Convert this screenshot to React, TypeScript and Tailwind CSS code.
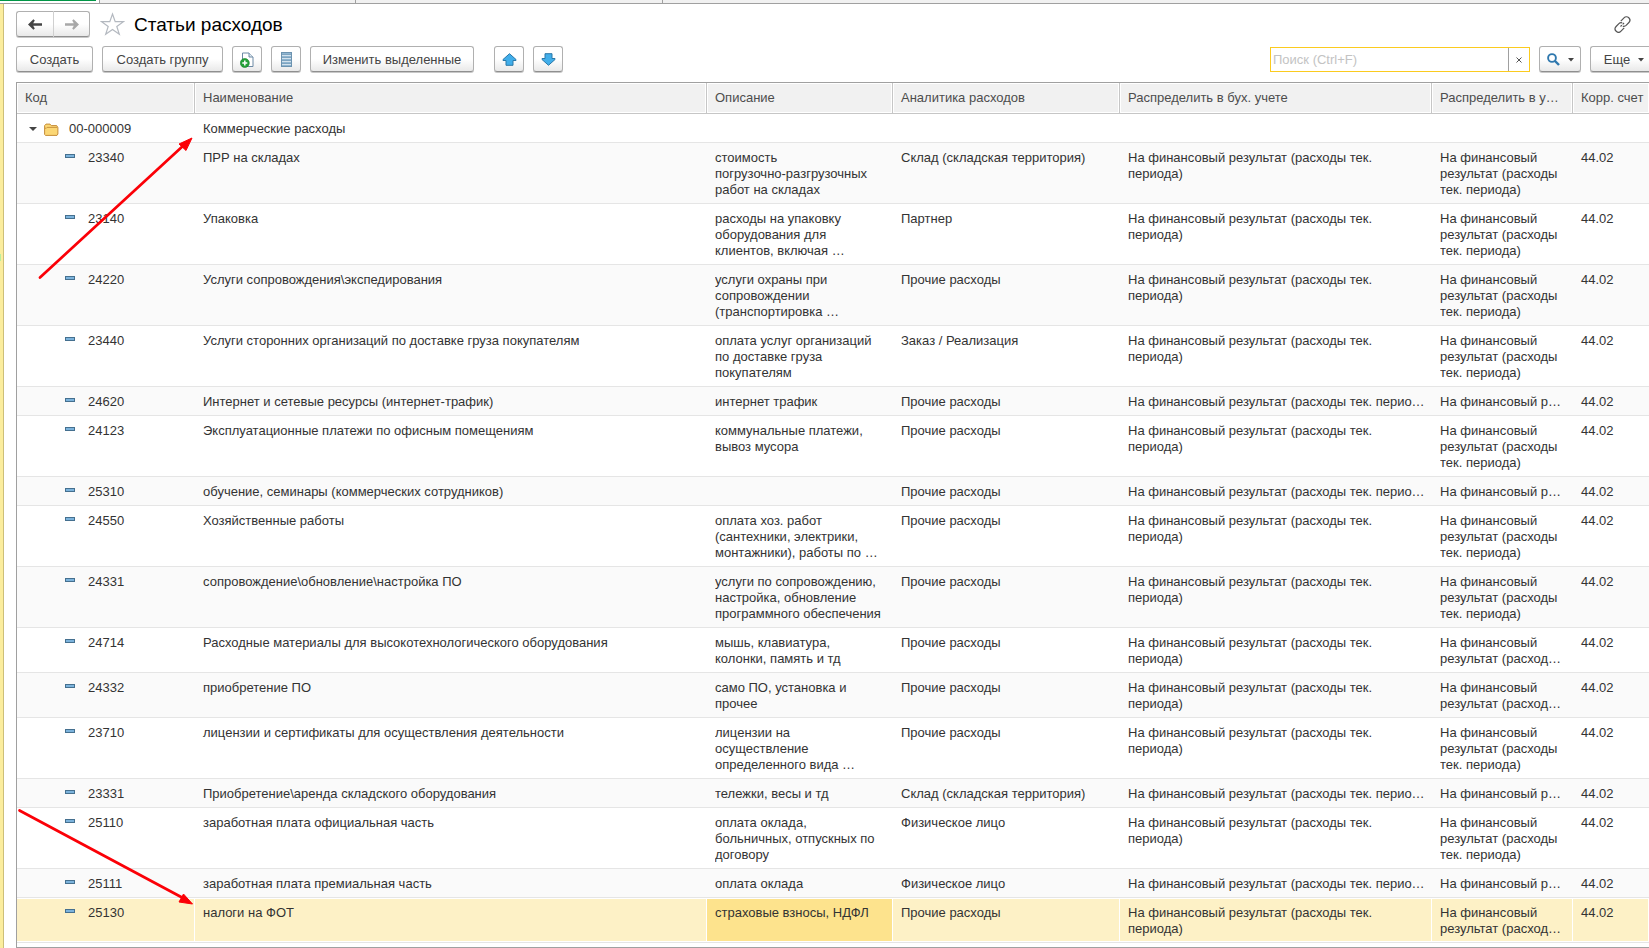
import React, { useState } from 'react';

interface ExpenseItem {
  code: string;
  name: string;
  description: string;
  analytics: string;
  lines: 1 | 2 | 3;
}

const DISTRIBUTION = 'На финансовый результат (расходы тек. периода)';
const ACCOUNT = '44.02';

const ITEMS: ExpenseItem[] = [
  { code: '23340', name: 'ПРР на складах', description: 'стоимость\nпогрузочно-разгрузочных\nработ на складах', analytics: 'Склад (складская территория)', lines: 3 },
  { code: '23140', name: 'Упаковка', description: 'расходы на упаковку оборудования для клиентов, включая …', analytics: 'Партнер', lines: 3 },
  { code: '24220', name: 'Услуги сопровождения\\экспедирования', description: 'услуги охраны при сопровождении (транспортировка …', analytics: 'Прочие расходы', lines: 3 },
  { code: '23440', name: 'Услуги сторонних организаций по доставке груза покупателям', description: 'оплата услуг организаций по доставке груза покупателям', analytics: 'Заказ / Реализация', lines: 3 },
  { code: '24620', name: 'Интернет и сетевые ресурсы (интернет-трафик)', description: 'интернет трафик', analytics: 'Прочие расходы', lines: 1 },
  { code: '24123', name: 'Эксплуатационные платежи по офисным помещениям', description: 'коммунальные платежи, вывоз мусора', analytics: 'Прочие расходы', lines: 3 },
  { code: '25310', name: 'обучение, семинары (коммерческих сотрудников)', description: '', analytics: 'Прочие расходы', lines: 1 },
  { code: '24550', name: 'Хозяйственные работы', description: 'оплата хоз. работ (сантехники, электрики, монтажники), работы по …', analytics: 'Прочие расходы', lines: 3 },
  { code: '24331', name: 'сопровождение\\обновление\\настройка ПО', description: 'услуги по сопровождению, настройка, обновление программного обеспечения', analytics: 'Прочие расходы', lines: 3 },
  { code: '24714', name: 'Расходные материалы для высокотехнологического оборудования', description: 'мышь, клавиатура, колонки, память и тд', analytics: 'Прочие расходы', lines: 2 },
  { code: '24332', name: 'приобретение ПО', description: 'само ПО, установка и прочее', analytics: 'Прочие расходы', lines: 2 },
  { code: '23710', name: 'лицензии и сертификаты для осуществления деятельности', description: 'лицензии на осуществление определенного вида …', analytics: 'Прочие расходы', lines: 3 },
  { code: '23331', name: 'Приобретение\\аренда складского оборудования', description: 'тележки, весы и тд', analytics: 'Склад (складская территория)', lines: 1 },
  { code: '25110', name: 'заработная плата официальная часть', description: 'оплата оклада, больничных, отпускных по договору', analytics: 'Физическое лицо', lines: 3 },
  { code: '25111', name: 'заработная плата премиальная часть', description: 'оплата оклада', analytics: 'Физическое лицо', lines: 1 },
  { code: '25130', name: 'налоги на ФОТ', description: 'страховые взносы, НДФЛ', analytics: 'Прочие расходы', lines: 2 },
];

const COLUMNS = [
  { title: 'Код', width: 'w-[178px]' },
  { title: 'Наименование', width: '' },
  { title: 'Описание', width: 'w-[186px]' },
  { title: 'Аналитика расходов', width: 'w-[227px]' },
  { title: 'Распределить в бух. учете', width: 'w-[312px]' },
  { title: 'Распределить в упр. учете', width: 'w-[141px]' },
  { title: 'Корр. счет', width: 'w-[76px]' },
];

const CLAMP = {
  1: 'truncate',
  2: 'line-clamp-2',
  3: 'line-clamp-3',
};

const buttonBase =
  'flex h-[26px] shrink-0 items-center justify-center rounded-[3px] border border-[#b0b0b0] border-b-[#8f8f8f] bg-linear-to-b from-white from-50% to-[#e9e9e9] pt-px text-[13px] text-[#444444] shadow-[0_1px_0_#c8c8c8]';

const Caret = () => (
  <svg width="6" height="4" viewBox="0 0 6 4" fill="#444444">
    <path d="M0 0h6L3 3.5z" />
  </svg>
);

const LongArrow: React.FC<{ color: string; flip?: boolean }> = ({ color, flip }) => (
  <svg width="14" height="11" viewBox="0 0 14 11" className={flip ? 'rotate-180' : ''}>
    <path d="M0 4.200h8.800L7.200 1.600 8.600.3 14 5.500 8.600 10.700 7.200 9.400 8.800 6.800H0z" fill={color} />
  </svg>
);

const BlueArrow: React.FC<{ down?: boolean }> = ({ down }) => (
  <svg width="15" height="13" viewBox="0 0 15 13" className={down ? 'rotate-180' : ''}>
    <path d="M7.500.7L14 6.500V7.500h-3v4.800H4V7.500H1V6.500z" fill="#41aeea" stroke="#2a78a8" strokeLinejoin="round" />
  </svg>
);

const CopyIcon = () => (
  <svg width="14" height="16" viewBox="0 0 14 16">
    <path d="M2.500 1h6.500l4 4v9.500H2.500z" fill="#fff" stroke="#6d8aa5" />
    <path d="M9 1v4h4" fill="#dfe8f0" stroke="#6d8aa5" />
    <circle cx="4.800" cy="11" r="4.500" fill="#23a038" stroke="#168428" strokeWidth=".6" />
    <path d="M4.800 8.500v5M2.300 11h5" stroke="#fff" strokeWidth="1.500" />
  </svg>
);

const ListIcon = () => (
  <svg width="11" height="15" viewBox="0 0 11 15">
    <rect x=".5" y=".5" width="10" height="14" fill="#8fb5d0" stroke="#6c93b0" />
    <path d="M1 3.500h9M1 6.500h9M1 9.500h9M1 12.500h9" stroke="#d3e2ed" />
    <path d="M1 2.500h9M1 5.500h9M1 8.500h9M1 11.500h9" stroke="#7299b5" strokeWidth=".6" />
  </svg>
);

const FolderIcon = () => (
  <svg width="15" height="13" viewBox="0 0 15 13">
    <path d="M.6 11.500V2.600L2 1.100h4l1.300 1.500h5.400l1.200 2v6.400l-.9 1.400H1.500z" fill="#fbd775" stroke="#c58d3a" />
    <path d="M1 5.200h1.300l.8-.8h10.200" fill="none" stroke="#c58d3a" strokeWidth=".9" />
  </svg>
);

const App = () => {
  const [query, setQuery] = useState('');
  const [expanded, setExpanded] = useState(true);
  const [selected, setSelected] = useState('25130');

  return (
    <div className="relative min-h-screen overflow-hidden bg-white font-['Liberation_Sans',Arial,sans-serif] text-[13px] leading-4 text-[#333333]">
      {/* Window tabs strip */}
      <div className="flex h-1 border-b border-[#a0a0a0] bg-[#f1f1f1]">
        <div className="w-24 border-t border-[#009646] bg-white" />
        <div className="w-1 border-r border-[#a0a0a0] bg-white" />
        <div className="w-64 border-r border-[#a0a0a0]" />
        <div className="w-[307px] border-r border-[#a0a0a0]" />
      </div>

      <div className="flex">
        <div className="w-1 shrink-0 border-r border-[#cdbf78] bg-[#fbed9e] pt-[250px]">
          <div className="h-[7px] w-px bg-[#b9ef9e]" />
        </div>

        <main className="min-w-0 flex-1 pl-3">
          <header className="flex h-10 items-center">
            <div className="flex rounded-[3px]">
              <button aria-label="Назад" className={`${buttonBase} w-[38px] rounded-r-none border-r-[#d0d0d0]`}>
                <LongArrow color="#444444" flip />
              </button>
              <button aria-label="Вперед" className={`${buttonBase} w-9 rounded-l-none border-l-0`}>
                <LongArrow color="#a8a8a8" />
              </button>
            </div>
            <button aria-label="Добавить в избранное" className="ml-2.5">
              <svg width="25" height="24" viewBox="0 0 25 24">
                <path
                  d="M12.500 2l2.700 7.700h8.200l-6.600 4.800 2.500 7.800-6.800-4.800-6.800 4.800 2.500-7.800L1.600 9.700h8.200z"
                  fill="#fff"
                  stroke="#b4b9c0"
                  strokeWidth="1.200"
                />
              </svg>
            </button>
            <h1 className="ml-[9px] pt-px text-[19px] leading-6 text-black">Статьи расходов</h1>
            <button aria-label="Получить ссылку" className="mr-[18px] ml-auto">
              <svg width="17" height="17" viewBox="0 0 17 17" fill="none" stroke="#555555" strokeWidth="1.200">
                <path d="M6.800 5.200l3.200-3.400a3.300 3.300 0 0 1 4.900 4.700l-2.800 2.900a3.200 3.200 0 0 1-3.300.7" />
                <path d="M10.200 11.800l-3.200 3.400a3.300 3.300 0 0 1-4.900-4.700l2.800-2.900a3.200 3.200 0 0 1 3.300-.7" />
                <path d="M6.500 10.500l4-4" strokeDasharray="2 1" />
              </svg>
            </button>
          </header>

          <div className="flex h-[38px] items-start pt-0.5">
            <div className="flex gap-[9px]">
              <button className={`${buttonBase} w-[77px]`}>Создать</button>
              <button className={`${buttonBase} w-[121px]`}>Создать группу</button>
              <button aria-label="Скопировать" className={`${buttonBase} w-[30px]`}>
                <CopyIcon />
              </button>
              <button aria-label="Список" className={`${buttonBase} w-[30px]`}>
                <ListIcon />
              </button>
              <button className={`${buttonBase} w-[164px]`}>Изменить выделенные</button>
            </div>
            <div className="ml-5 flex gap-[9px]">
              <button aria-label="Переместить вверх" className={`${buttonBase} w-[30px]`}>
                <BlueArrow />
              </button>
              <button aria-label="Переместить вниз" className={`${buttonBase} w-[30px]`}>
                <BlueArrow down />
              </button>
            </div>
            <div className="ml-auto flex shrink-0">
              <div className="mt-px flex h-[25px] w-[260px] border border-[#fbcb1f] bg-white">
                <input
                  type="text"
                  aria-label="Поиск"
                  placeholder="Поиск (Ctrl+F)"
                  value={query}
                  onChange={(e) => setQuery(e.target.value)}
                  className="min-w-0 flex-1 px-0.5 outline-none placeholder:text-[#c3c3c3]"
                />
                <button
                  aria-label="Очистить"
                  onClick={() => setQuery('')}
                  className="flex w-[21px] items-center justify-center border-l border-[#a0a0a0]"
                >
                  <svg width="6" height="6" viewBox="0 0 6 6" stroke="#555555">
                    <path d="M.5.5l5 5M5.500.5l-5 5" />
                  </svg>
                </button>
              </div>
              <button aria-label="Найти" className={`${buttonBase} ml-[9px] w-[42px] gap-2`}>
                <svg width="13" height="13" viewBox="0 0 13 13" fill="none" stroke="#2f78ae">
                  <circle cx="5" cy="5" r="3.900" strokeWidth="1.900" />
                  <path d="M8 8l4 4" strokeWidth="2.400" />
                </svg>
                <Caret />
              </button>
              <button className={`${buttonBase} ml-[9px] w-[59px] gap-2 rounded-r-none border-r-0 pl-2`}>
                Еще
                <Caret />
              </button>
            </div>
          </div>

          <div className="border-y border-l border-[#a0a0a0] pb-1">
            <table className="w-full table-fixed border-separate border-spacing-0">
              <colgroup>
                {COLUMNS.map((column) => (
                  <col key={column.title} className={column.width} />
                ))}
              </colgroup>
              <thead>
                <tr>
                  {COLUMNS.map((column) => (
                    <th
                      key={column.title}
                      className="h-[31px] truncate border-r border-b border-[#c6c6c6] bg-[#f1f1f1] px-2 text-left font-normal text-[#4d4d4d] shadow-[inset_0_0_0_1px_#fff] last:border-r-0 last:pr-1"
                    >
                      {column.title}
                    </th>
                  ))}
                </tr>
              </thead>
              <tbody>
                <tr>
                  <td className="border-b border-[#e5e5e5] pt-[7px] pb-[5px]">
                    <div className="flex items-center">
                      <button
                        aria-label="Свернуть группу"
                        onClick={() => setExpanded(!expanded)}
                        className="ml-3 flex h-4 w-[15px] items-center"
                      >
                        <svg width="8" height="4" viewBox="0 0 8 4" fill="#444444">
                          <path d="M0 0h8L4 4z" />
                        </svg>
                      </button>
                      <FolderIcon />
                      <span className="ml-2.5">00-000009</span>
                    </div>
                  </td>
                  <td className="border-b border-[#e5e5e5] px-2 pt-[7px] pb-[5px]">Коммерческие расходы</td>
                  <td colSpan={5} className="border-b border-[#e5e5e5]" />
                </tr>
                {expanded &&
                  ITEMS.map((item) => {
                    const active = item.code === selected;
                    const cell = `border-b border-[#e5e5e5] pt-[7px] pb-[5px] pl-2 align-top ${
                      active ? 'shadow-[inset_-1px_-1px_0_#fff,inset_0_1px_0_#fff]' : ''
                    }`;
                    return (
                      <tr
                        key={item.code}
                        onClick={() => setSelected(item.code)}
                        className={active ? 'bg-[#fdf1c6]' : 'odd:bg-white even:bg-[#fafafa]'}
                      >
                        <td className={`${cell} pr-2`}>
                          <div className="flex">
                            <span className="mt-1 ml-10 h-1 w-2.5 border border-[#45708f] bg-[#7cb3dc]" />
                            <span className="ml-[13px]">{item.code}</span>
                          </div>
                        </td>
                        <td className={`${cell} pr-2`}>{item.name}</td>
                        <td className={`${cell} pr-2 ${active ? 'bg-[#fde38d]' : ''}`}>
                          <div className={`whitespace-pre-line ${item.lines === 3 ? 'line-clamp-3' : 'line-clamp-2'}`}>
                            {item.description}
                          </div>
                        </td>
                        <td className={`${cell} pr-2`}>{item.analytics}</td>
                        <td className={`${cell} pr-1`}>
                          <div className={CLAMP[item.lines]}>{DISTRIBUTION}</div>
                        </td>
                        <td className={`${cell} pr-2`}>
                          <div className={CLAMP[item.lines]}>{DISTRIBUTION}</div>
                        </td>
                        <td className={`${cell} pr-2`}>{ACCOUNT}</td>
                      </tr>
                    );
                  })}
              </tbody>
            </table>
          </div>
        </main>
      </div>

      {/* Red pointer arrows drawn over the list */}
      <svg
        className="pointer-events-none absolute top-0 left-0"
        width="200"
        height="940"
        viewBox="0 0 200 940"
        fill="#fb0007"
        stroke="#fb0007"
      >
        <path d="M40 277.500L184 145" strokeWidth="2.700" strokeLinecap="round" />
        <path d="M192 138l-6 12.500-7-6.500z" />
        <path d="M19.500 810.500L183 898" strokeWidth="2.700" strokeLinecap="round" />
        <path d="M192.500 904l-13.500-2 4.500-8z" />
      </svg>
    </div>
  );
};

export default App;
